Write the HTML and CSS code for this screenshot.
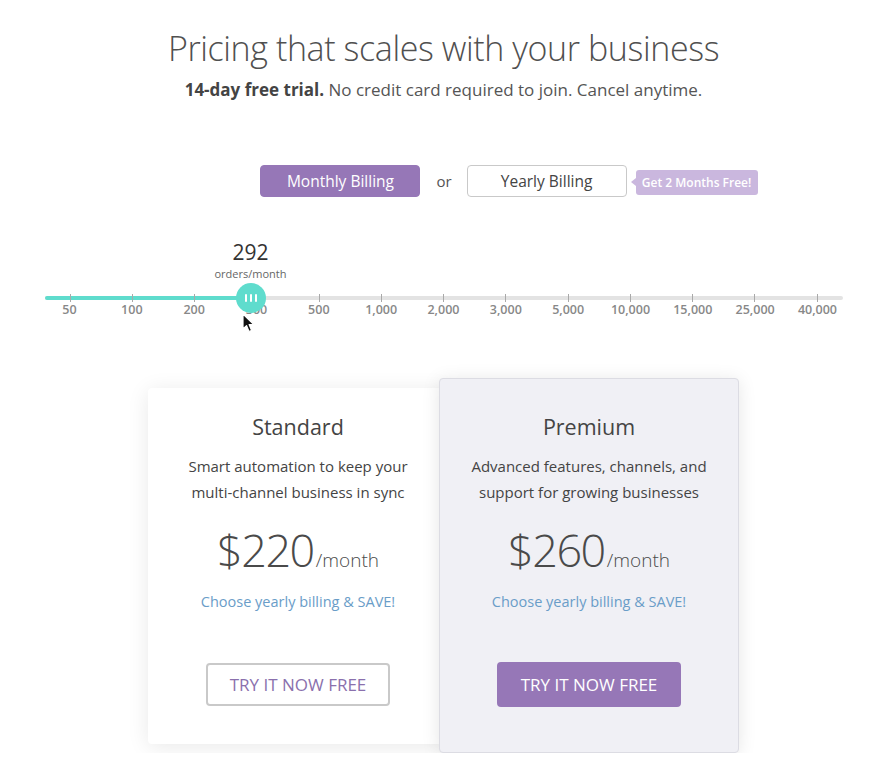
FILE: index.html
```html
<!DOCTYPE html>
<html lang="en">
<head>
    <meta charset="UTF-8">
    <meta name="viewport" content="width=device-width, initial-scale=1.0">
    <title>Pricing</title>
    <link rel="stylesheet" href="styles.css">
</head>
<body>
    <header class="intro">
        <h1>Pricing that scales with your business</h1>
        <p class="lead"><strong>14-day free trial.</strong> No credit card required to join. Cancel anytime.</p>
    </header>

    <div class="billing">
        <button class="billing-btn active">Monthly Billing</button>
        <span class="billing-or">or</span>
        <div class="yearly">
            <button class="billing-btn">Yearly Billing</button>
            <span class="promo">Get 2 Months Free!</span>
        </div>
    </div>

    <div class="slider">
        <div class="track">
            <div class="track-fill" style="width: 206px;"></div>
            <div class="ticks">
                <span></span><span></span><span></span><span></span><span></span>
                <span></span><span></span><span></span><span></span><span></span>
                <span></span><span></span><span></span>
            </div>
            <div class="handle" style="left: 206px;">
                <div class="handle-value">
                    <span class="count">292</span>
                    <span class="unit">orders/month</span>
                </div>
                <i></i><i></i><i></i>
            </div>
            <svg class="cursor" width="13" height="20" viewBox="0 0 13 20">
                <path d="M1 1 L1 16 L4.5 12.6 L7 18.5 L9.6 17.4 L7.1 11.6 L11.8 11.6 Z" fill="#111" stroke="#fff" stroke-width="1.2" stroke-linejoin="round"/>
            </svg>
        </div>
        <div class="scale">
            <span>50</span><span>100</span><span>200</span><span>300</span><span>500</span>
            <span>1,000</span><span>2,000</span><span>3,000</span><span>5,000</span>
            <span>10,000</span><span>15,000</span><span>25,000</span><span>40,000</span>
        </div>
    </div>

    <div class="plans">
        <div class="plan">
            <h2>Standard</h2>
            <p class="plan-desc">Smart automation to keep your<br>multi-channel business in sync</p>
            <div class="price"><span class="amount">$220</span><span class="per">/month</span></div>
            <a href="#" class="save-link">Choose yearly billing &amp; SAVE!</a>
            <button class="try-btn">TRY IT NOW FREE</button>
        </div>
        <div class="plan featured">
            <h2>Premium</h2>
            <p class="plan-desc">Advanced features, channels, and<br>support for growing businesses</p>
            <div class="price"><span class="amount">$260</span><span class="per">/month</span></div>
            <a href="#" class="save-link">Choose yearly billing &amp; SAVE!</a>
            <button class="try-btn">TRY IT NOW FREE</button>
        </div>
    </div>
</body>
</html>
```

FILE: styles.css
```css
* {
    margin: 0;
    padding: 0;
    box-sizing: border-box;
    font-family: 'Open Sans', 'Noto Sans', sans-serif;
}

body {
    background: #fff;
    color: #4a4a4a;
    display: flex;
    flex-direction: column;
    align-items: center;
    padding-left: 3px;
}

.intro {
    padding-top: 26px;
    text-align: center;
}

h1 {
    font-size: 34px;
    font-weight: 300;
    line-height: 44px;
    letter-spacing: -0.4px;
    color: #505050;
}

.lead {
    margin-top: 7px;
    font-size: 17px;
    line-height: 26px;
    color: #555;
}

.lead strong {
    font-weight: 700;
    color: #444;
}

/* billing toggle */
.billing {
    margin-top: 62px;
    display: flex;
    align-items: center;
}

.billing-btn {
    width: 160px;
    height: 32px;
    background: #fff;
    border: 1px solid #c9c9c9;
    border-radius: 4px;
    font-size: 15.5px;
    color: #444;
    cursor: pointer;
}

.billing-btn.active {
    background: #9677b7;
    border-color: #9677b7;
    color: #fff;
}

.billing-or {
    margin: 0 15px 0 16px;
    font-size: 15px;
    color: #555;
}

.yearly {
    position: relative;
}

.promo {
    position: absolute;
    left: calc(100% + 9px);
    top: 5px;
    height: 25px;
    width: 122px;
    background: #cab7de;
    color: #fff;
    font-size: 12px;
    font-weight: 600;
    line-height: 25px;
    text-align: center;
    border-radius: 3px;
    white-space: nowrap;
}

.promo::before {
    content: '';
    position: absolute;
    left: -5px;
    top: 8px;
    border-style: solid;
    border-width: 4.5px 5px 4.5px 0;
    border-color: transparent #cab7de transparent transparent;
}

/* order slider */
.slider {
    margin-top: 99px;
    width: 798px;
}

.track {
    position: relative;
    height: 4px;
    background: #e3e3e3;
    border-radius: 2px;
}

.track-fill {
    height: 100%;
    background: #5fdccd;
    border-radius: 2px;
}

.ticks {
    position: absolute;
    top: -2px;
    bottom: -2px;
    left: 25px;
    right: 25px;
    display: flex;
    justify-content: space-between;
}

.ticks span {
    width: 1px;
    background: #a9a9a9;
}

.handle {
    position: absolute;
    top: 50%;
    width: 30px;
    height: 30px;
    margin: -15px 0 0 -15px;
    border-radius: 50%;
    background: #5fdccd;
    display: flex;
    justify-content: center;
    align-items: center;
    gap: 3px;
}

.handle i {
    width: 2px;
    height: 8px;
    background: #fff;
    border-radius: 1px;
}

.handle-value {
    position: absolute;
    bottom: calc(100% + 3px);
    left: 50%;
    transform: translateX(-50%);
    display: flex;
    flex-direction: column;
    align-items: center;
    white-space: nowrap;
}

.count {
    font-size: 21px;
    line-height: 22px;
    margin-bottom: 4px;
    color: #333;
}

.unit {
    font-size: 11px;
    line-height: 13px;
    color: #666;
}

.cursor {
    position: absolute;
    left: 197px;
    top: 17px;
}

.scale {
    margin: 2px 25px 0;
    display: flex;
    justify-content: space-between;
}

.scale span {
    width: 0;
    display: flex;
    justify-content: center;
    white-space: nowrap;
    font-size: 12.5px;
    font-weight: 600;
    line-height: 16px;
    color: #888;
}

/* plan cards */
.plans {
    margin-top: 60px;
    display: flex;
    align-items: center;
}

.plan {
    width: 300px;
    padding: 24px 0 38px;
    background: #fff;
    border-radius: 4px;
    box-shadow: 0 3px 22px rgba(0, 0, 0, 0.09);
    display: flex;
    flex-direction: column;
    align-items: center;
    text-align: center;
}

.plan.featured {
    margin-left: -9px;
    padding: 33px 0 45px;
    background: #f0f0f5;
    border: 1px solid #dcdce3;
    box-shadow: 0 2px 18px rgba(0, 0, 0, 0.1);
    position: relative;
    z-index: 1;
}

.plan h2 {
    font-size: 21.5px;
    font-weight: 400;
    line-height: 30px;
    color: #444;
}

.plan-desc {
    margin-top: 11px;
    font-size: 15px;
    line-height: 26px;
    color: #444;
}

.price {
    margin-top: 15px;
    height: 60px;
    display: flex;
    align-items: baseline;
    color: #4a4a4a;
}

.amount {
    font-size: 45px;
    font-weight: 300;
    line-height: 60px;
    letter-spacing: -1.5px;
}

.per {
    font-size: 19px;
    font-weight: 300;
    margin-left: 2px;
}

.save-link {
    margin-top: 11px;
    font-size: 14.5px;
    line-height: 22px;
    color: #6a9dc8;
    text-decoration: none;
}

.try-btn {
    margin-top: 50px;
    width: 184px;
    height: 43px;
    background: #fff;
    border: 2px solid #c9c9c9;
    border-radius: 4px;
    font-size: 17px;
    color: #8a70ad;
    cursor: pointer;
}

.featured .try-btn {
    margin-top: 49px;
    height: 45px;
    background: #9677b7;
    border-color: #9677b7;
    color: #fff;
}
```
